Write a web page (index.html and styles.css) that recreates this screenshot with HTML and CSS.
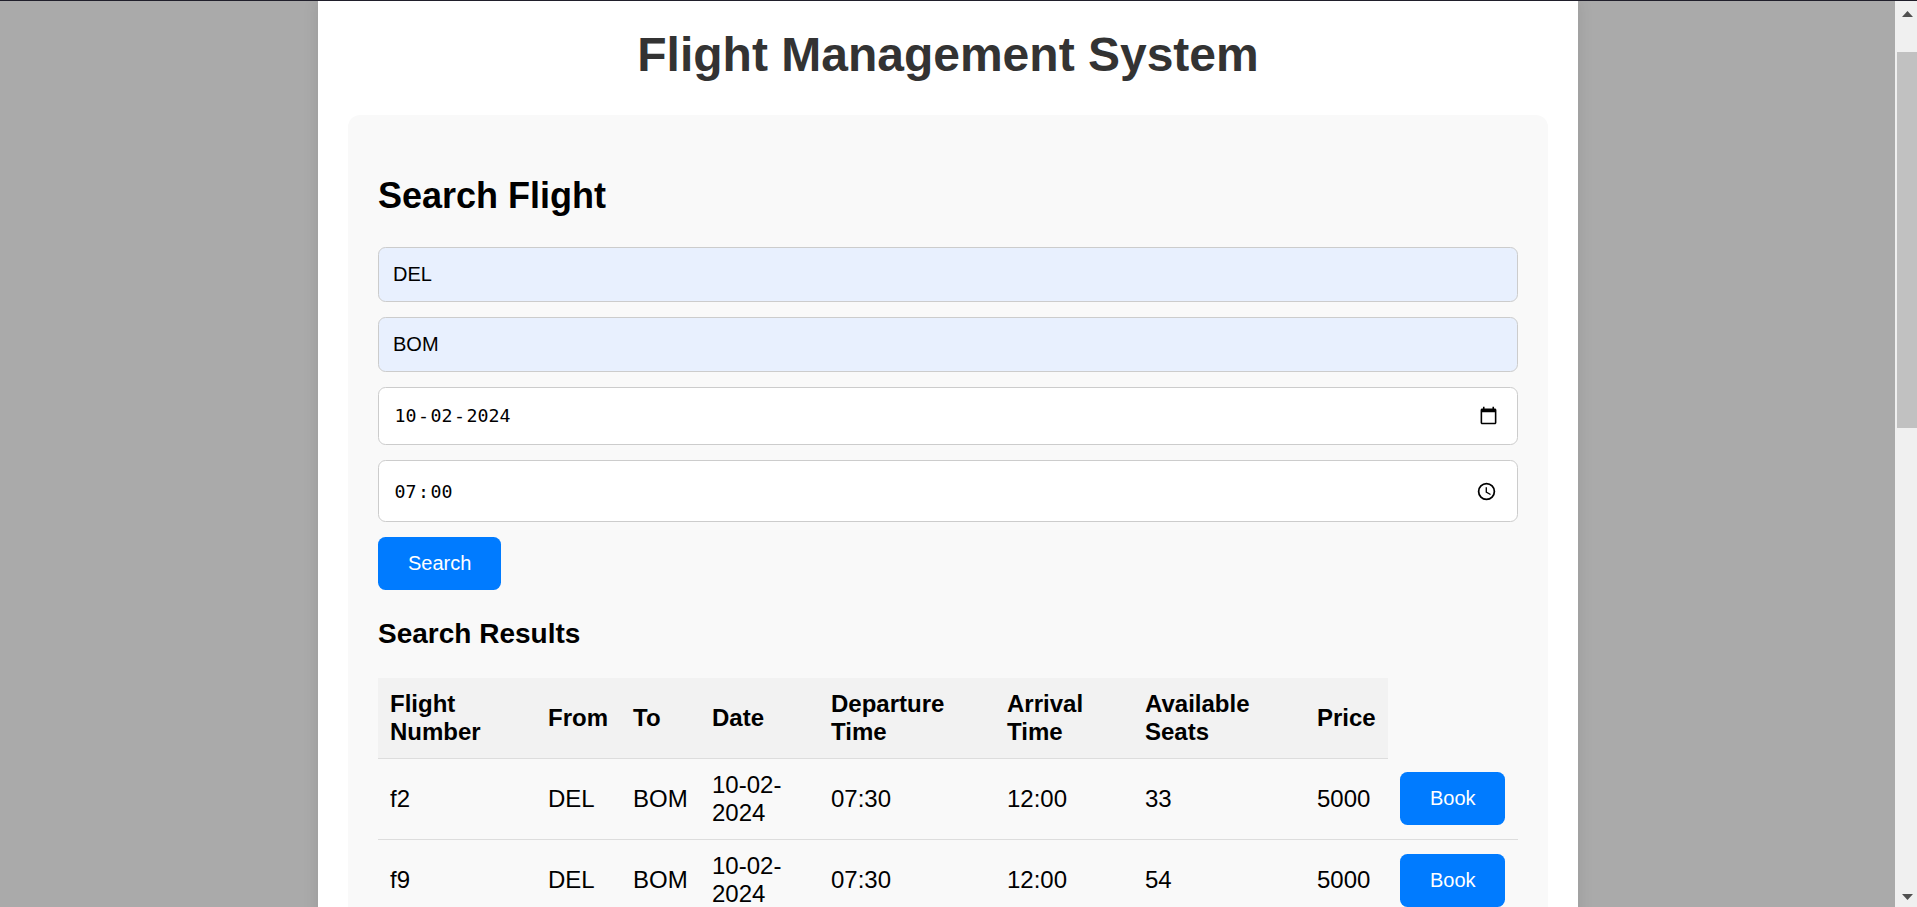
FILE: index.html
```
<!DOCTYPE html>
<html lang="en">
<head>
<meta charset="utf-8">
<title>Flight Management System</title>
<link rel="stylesheet" href="styles.css">
</head>
<body>
<div class="viewport">
  <main class="page">
    <div class="container">
      <h1 class="title">Flight Management System</h1>
      <section class="panel">
        <h2 class="panel-title">Search Flight</h2>
        <form class="search-form">
          <div class="field autofilled">DEL</div>
          <div class="field autofilled">BOM</div>
          <div class="field date-field">
            <div class="segments"><span>10</span><span class="sep">-</span><span>02</span><span class="sep">-</span><span>2024</span></div>
            <svg class="picker" viewBox="0 0 24 24"><path d="M20 3h-1V1h-2v2H7V1H5v2H4c-1.100 0-2 .9-2 2v16c0 1.100.9 2 2 2h16c1.100 0 2-.9 2-2V5c0-1.100-.9-2-2-2zm0 18H4V8h16v13z"/></svg>
          </div>
          <div class="field time-field">
            <div class="segments"><span>07</span><span class="sep">:</span><span>00</span></div>
            <svg class="picker clock" viewBox="0 0 24 24"><path d="M12 2a10 10 0 1 0 0 20 10 10 0 0 0 0-20zm0 18a8 8 0 1 1 0-16 8 8 0 0 1 0 16z"/><path d="M12.500 7H11v6l5.200 3.100.8-1.200-4.500-2.700z"/></svg>
          </div>
          <button class="button" type="button">Search</button>
        </form>
        <h3 class="results-title">Search Results</h3>
        <table class="results">
          <colgroup>
            <col class="c-number"><col class="c-from"><col class="c-to"><col class="c-date"><col class="c-departure"><col class="c-arrival"><col class="c-seats"><col class="c-price"><col class="c-action">
          </colgroup>
          <thead>
            <tr><th>Flight<br>Number</th><th>From</th><th>To</th><th>Date</th><th>Departure<br>Time</th><th>Arrival<br>Time</th><th>Available<br>Seats</th><th>Price</th></tr>
          </thead>
          <tbody>
            <tr><td>f2</td><td>DEL</td><td>BOM</td><td>10-02-<br>2024</td><td>07:30</td><td>12:00</td><td>33</td><td>5000</td><td class="action"><button class="button" type="button">Book</button></td></tr>
            <tr><td>f9</td><td>DEL</td><td>BOM</td><td>10-02-<br>2024</td><td>07:30</td><td>12:00</td><td>54</td><td>5000</td><td class="action"><button class="button" type="button">Book</button></td></tr>
          </tbody>
        </table>
      </section>
    </div>
  </main>
  <aside class="scrollbar">
    <svg class="arrow" viewBox="0 0 11 6"><path d="M0 6L5.500 0L11 6z"/></svg>
    <div class="thumb"></div>
    <svg class="arrow arrow-down" viewBox="0 0 11 6"><path d="M0 0L5.500 6L11 0z"/></svg>
  </aside>
</div>
</body>
</html>
```
FILE: styles.css
```
* { box-sizing: border-box; }

body {
  margin: 0;
  height: 907px;
  overflow: hidden;
  background: #aaa;
  color: #000;
  font-family: "Liberation Sans", Arial, sans-serif;
  font-size: 24px;
}

.viewport {
  display: flex;
  height: 907px;
  border-top: 1px solid #201f2b;
  overflow: hidden;
}

.page {
  flex: 1;
  display: flex;
  justify-content: center;
  align-items: flex-start;
  padding-left: 1px;
  overflow: hidden;
}

.container {
  width: 1260px;
  min-height: 960px;
  padding: 26px 30px 30px;
  background: #fff;
  box-shadow: 0 0 15px rgba(0, 0, 0, 0.1);
}

.title {
  margin: 0 0 32px;
  color: #333;
  font-size: 48px;
  line-height: 56px;
  text-align: center;
}

.panel {
  padding: 60px 30px 30px;
  background: #f9f9f9;
  border-radius: 12px;
}

.panel-title {
  margin: 0 0 31px;
  font-size: 36px;
  line-height: 41px;
}

.search-form {
  display: flex;
  flex-direction: column;
  align-items: flex-start;
  gap: 15px;
}

.field {
  display: flex;
  align-items: center;
  width: 100%;
  height: 55px;
  padding: 0 15px 1px 14px;
  border: 1px solid #ccc;
  border-radius: 7.5px;
  background: #fff;
  font-size: 20px;
}

.autofilled { background: #e8f0fe; }

.date-field {
  height: 58px;
  padding: 0 16px 1px 15px;
}

.time-field {
  height: 62px;
  padding: 0 15px;
}

.segments {
  display: flex;
  flex: 1;
  font-family: "DejaVu Sans Mono", monospace;
  font-size: 18.300px;
}

.segments span { padding: 0 0.500px; }

.segments .sep { padding: 0 1px; }

.picker {
  width: 19px;
  height: 19px;
  margin-right: 3px;
}

.clock {
  width: 21px;
  height: 21px;
  margin-right: 5px;
}

.button {
  height: 53px;
  padding: 0 30px;
  border: 0;
  border-radius: 7.5px;
  background: #007bff;
  color: #fff;
  font-family: inherit;
  font-size: 20px;
}

.results-title {
  margin: 28px 0;
  font-size: 28px;
  line-height: 32px;
}

.results {
  width: 1140px;
  table-layout: fixed;
  border-collapse: separate;
  border-spacing: 0;
  line-height: 28px;
}

.c-number { width: 158px; }
.c-from { width: 85px; }
.c-to { width: 79px; }
.c-date { width: 119px; }
.c-departure { width: 176px; }
.c-arrival { width: 138px; }
.c-seats { width: 172px; }
.c-price { width: 83px; }
.c-action { width: 130px; }

.results th,
.results td {
  height: 81px;
  padding: 12px 0 12px 12px;
  border-bottom: 1px solid #ddd;
  text-align: left;
}

.results th { background: #f2f2f2; }

.results .button {
  display: block;
  width: 105px;
}

.results tr:first-child .button { margin-bottom: 2px; }

.scrollbar {
  display: flex;
  flex-direction: column;
  align-items: flex-end;
  width: 22px;
  background: #f0f0f0;
}

.arrow {
  width: 11px;
  height: 6px;
  margin: 10px 4px 35px 0;
  fill: #505050;
}

.thumb {
  width: 20px;
  height: 376px;
  background: #c1c1c1;
}

.arrow-down { margin: auto 4px 7px 0; }
```
